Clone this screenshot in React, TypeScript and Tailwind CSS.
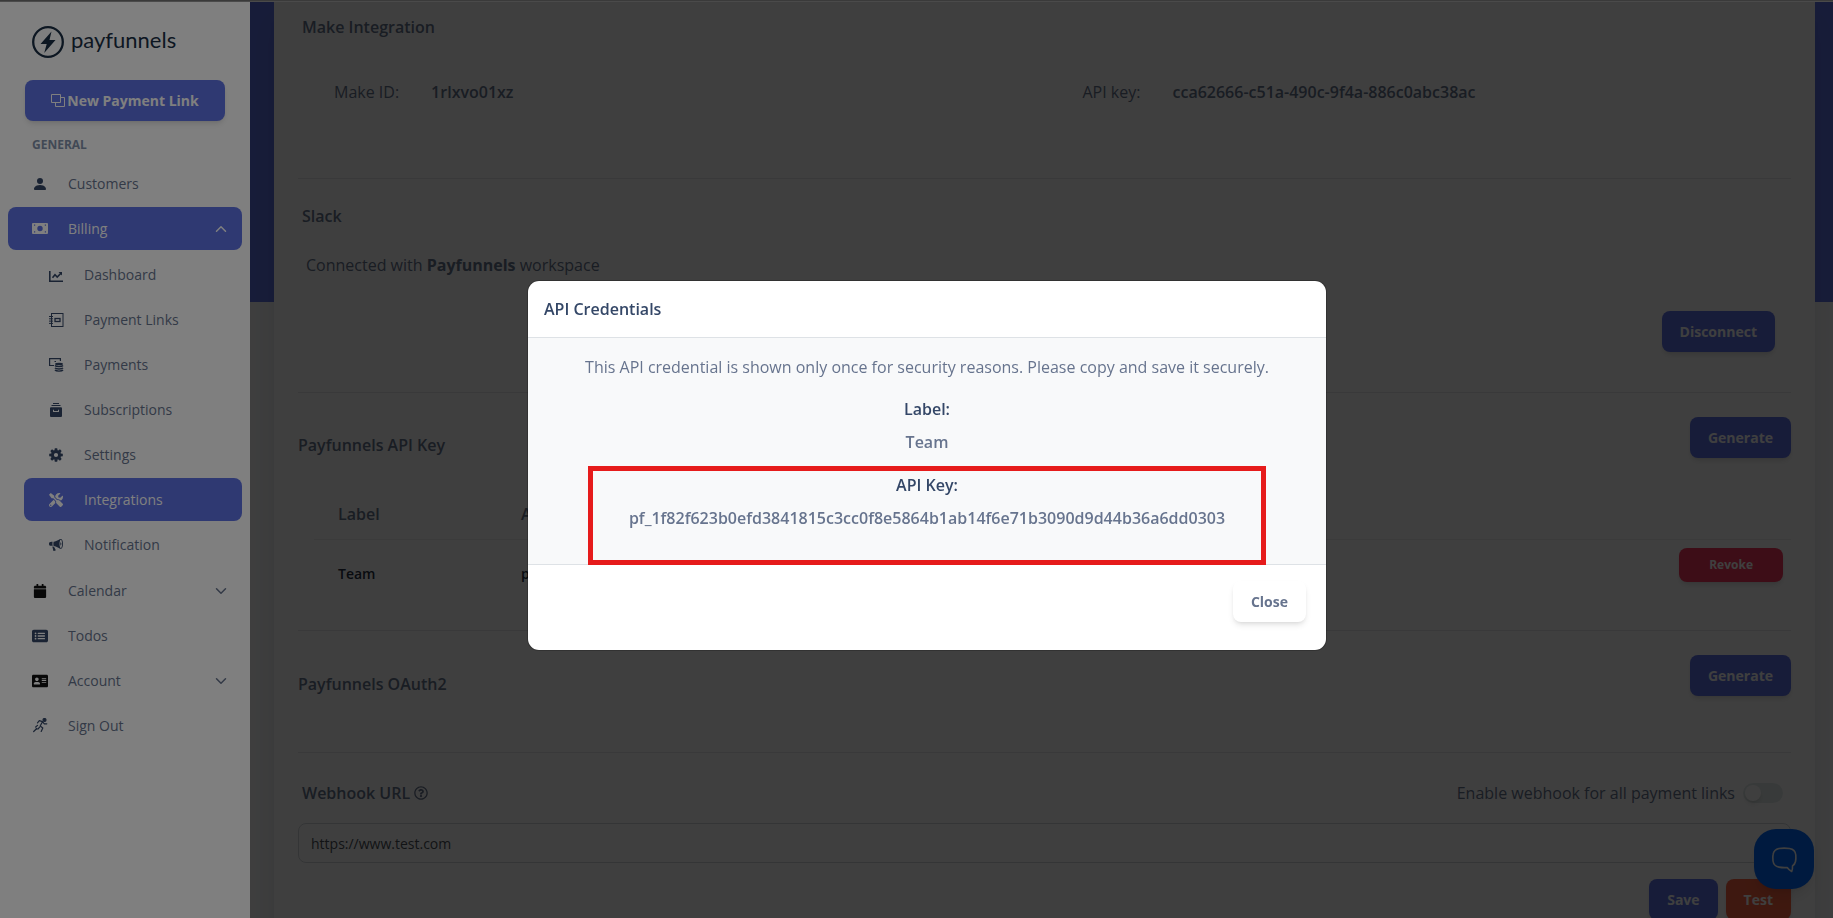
import { useState } from "react";
import type { ReactNode } from "react";
import { ChevronDown, ChevronUp } from "lucide-react";
import { FaAddressCard, FaCalendar, FaRegQuestionCircle, FaTools } from "react-icons/fa";
import { FaRectangleList } from "react-icons/fa6";
import { BsPersonFill } from "react-icons/bs";
import { ImBullhorn } from "react-icons/im";

function CashIcon() {
  return (
    <svg width="16" height="11" viewBox="0 0 16 11" fill="currentColor">
      <path
        fillRule="evenodd"
        d="M1 0h14a1 1 0 0 1 1 1v9a1 1 0 0 1-1 1H1a1 1 0 0 1-1-1V1a1 1 0 0 1 1-1zm7 2.800a2.700 2.700 0 1 0 0 5.400 2.700 2.700 0 0 0 0-5.400zM2 1.600v1.200h1.200V1.600zm10.800 0v1.200H14V1.600zM2 8.200v1.200h1.200V8.200zm10.800 0v1.200H14V8.200z"
      />
    </svg>
  );
}

function ChartIcon() {
  return (
    <svg width="14" height="17" viewBox="0 0 14 17" fill="none" stroke="currentColor">
      <path d="M.8 5v10.200H14" strokeWidth="1.600" />
      <path d="M3.500 11.800 6 8.800l2.200 2.200 4-4" strokeWidth="1.600" />
      <path d="M9.500 6h3.500v3.500z" fill="currentColor" stroke="none" />
    </svg>
  );
}

function CopyIcon() {
  return (
    <svg width="14" height="13" viewBox="0 0 14 13" fill="none" stroke="currentColor">
      <path d="M.5.5h9v8h-9zM9.500 3.500h4v9h-9v-4" />
    </svg>
  );
}

function NotebookIcon() {
  return (
    <svg width="15" height="14" viewBox="0 0 15 14" fill="none" stroke="currentColor">
      <rect x="2.500" y=".5" width="11.500" height="13" />
      <rect x="6" y="5.500" width="5" height="3" strokeWidth="1.300" />
      <path d="M0 3.500h4M0 5.800h4M0 8.100h4M0 10.400h4" />
    </svg>
  );
}

function PaymentsIcon() {
  return (
    <svg width="15" height="14" viewBox="0 0 15 14" fill="none" stroke="currentColor">
      <path d="M5 7.500H.6V.6h10.800V3" strokeWidth="1.200" />
      <path d="M5.500 3.500h1.500" />
      <ellipse cx="10" cy="6" rx="4" ry="1.300" fill="currentColor" stroke="none" />
      <path d="M6 7.500c1 1.500 7 1.500 8 0M6 9.800c1 1.500 7 1.500 8 0M6 12c1 1.500 7 1.500 8 0" strokeWidth="1.400" />
    </svg>
  );
}

function ArchiveIcon() {
  return (
    <svg width="12" height="14" viewBox="0 0 12 14" fill="currentColor">
      <path d="M3 0h6v1H3zM1.500 2h9v1h-9z" />
      <path
        fillRule="evenodd"
        d="M1 4.200h10a1 1 0 0 1 1 1V13a1 1 0 0 1-1 1H1a1 1 0 0 1-1-1V5.200a1 1 0 0 1 1-1zM3 6.800v2.200h6V6.800H8v1.100H4V6.800z"
      />
    </svg>
  );
}

function GearIcon() {
  return (
    <svg width="14" height="14" viewBox="-7 -7 14 14" fill="currentColor">
      <circle r="3.600" fill="none" stroke="currentColor" strokeWidth="3" />
      {[0, 45, 90, 135].map((angle) => (
        <g key={angle} transform={`rotate(${angle})`}>
          <path d="M-1.200-6.800h2.400l.4 2.300h-3.200zM-1.200 6.800h2.400l.4-2.300h-3.200z" />
        </g>
      ))}
    </svg>
  );
}

function RunnerIcon() {
  return (
    <svg width="15" height="15" viewBox="0 0 15 15" fill="none" stroke="currentColor" strokeWidth="1.200" strokeLinecap="round" strokeLinejoin="round">
      <circle cx="11.500" cy="2" r="1.500" fill="currentColor" />
      <path d="M4.500 4.800 6.300 2.600l3.200 1L7.200 8l2.600 2-1.600 3.500M9.500 3.600l1.800 2.200h2.500M6.600 9.200 5 11H3.200" />
      <path d="M.7 13.500l3-3M2.700 9l1.800-1.600" />
    </svg>
  );
}

function ChatIcon() {
  return (
    <svg width="28" height="28" viewBox="0 0 28 28" fill="none" stroke="currentColor" strokeWidth="1.600" strokeLinejoin="round">
      <path d="M9 3.500C12 3 16 3 19.500 3.500c3.600.6 6 3 6.300 6.500.2 2.500.1 4.500-.3 6.500-.4 2-1.400 3.400-3 4.400.1 2 .1 4-.8 5.600-2-1-3.400-2.400-4.500-4-3 .2-5.700.1-8.200-.4-3.500-.6-5.500-2.600-6-6.100-.3-2.300-.3-4.600.1-6.600C3.700 6 5.700 4.200 9 3.500z" />
    </svg>
  );
}

function Logo() {
  return (
    <a href="#" className="flex items-center gap-[7px] pl-8 text-[#1b2f45]">
      <svg width="32" height="32" viewBox="0 0 32 32">
        <circle cx="16" cy="16" r="14.800" fill="none" stroke="currentColor" strokeWidth="2.300" />
        <path d="M19.500 5.500 8.500 18h6.200l-2.500 9L23.500 14h-6z" fill="currentColor" />
      </svg>
      <span className="pb-1 font-[Lato] text-[22px] leading-7">payfunnels</span>
    </a>
  );
}

type NavItemProps = {
  icon: ReactNode;
  label: string;
  nested?: boolean;
  active?: boolean;
  dark?: boolean;
  chevron?: "up" | "down";
};

function NavItem({ icon, label, nested, active, dark, chevron }: NavItemProps) {
  const color = active ? "bg-[#5e72e4] font-medium text-white" : "text-[#67748e]";
  const iconColor = active ? "text-white" : dark ? "text-[#111111]" : "text-[#344767]";
  return (
    <li>
      <a
        href="#"
        className={`flex h-[43px] items-center rounded-lg pr-3 pl-6 ${color} ${nested ? "ml-4" : ""}`}
      >
        <span className={`flex w-4 justify-center ${iconColor}`}>{icon}</span>
        <span className="flex-1 pl-5">{label}</span>
        {chevron === "up" && <ChevronUp size={18} />}
        {chevron === "down" && <ChevronDown size={18} />}
      </a>
    </li>
  );
}

function Sidebar() {
  return (
    <aside className="w-[250px] shrink-0 bg-white pt-6 text-sm">
      <Logo />
      <div className="px-[25px] pt-[22px]">
        <button className="flex h-[41px] w-full items-center justify-center gap-0.5 rounded-lg bg-[#5e72e4] font-bold text-white shadow-md">
          <CopyIcon />
          New Payment Link
        </button>
      </div>
      <h6 className="pt-4 pl-8 text-xs leading-4 font-bold text-[#8392ab]">GENERAL</h6>
      <ul className="flex flex-col gap-0.5 px-2 pt-[9px]">
        <NavItem icon={<BsPersonFill size={16} />} label="Customers" />
        <NavItem icon={<CashIcon />} label="Billing" active chevron="up" />
        <li>
          <ul className="flex flex-col gap-0.5 py-px">
            <NavItem nested icon={<ChartIcon />} label="Dashboard" />
            <NavItem nested icon={<NotebookIcon />} label="Payment Links" />
            <NavItem nested icon={<PaymentsIcon />} label="Payments" />
            <NavItem nested icon={<ArchiveIcon />} label="Subscriptions" />
            <NavItem nested icon={<GearIcon />} label="Settings" />
            <NavItem nested active icon={<FaTools size={14} />} label="Integrations" />
            <NavItem nested icon={<ImBullhorn size={14} />} label="Notification" />
          </ul>
        </li>
        <NavItem dark icon={<FaCalendar size={14} />} label="Calendar" chevron="down" />
        <NavItem icon={<FaRectangleList size={16} />} label="Todos" />
        <NavItem dark icon={<FaAddressCard size={16} />} label="Account" chevron="down" />
        <NavItem icon={<RunnerIcon />} label="Sign Out" />
      </ul>
    </aside>
  );
}

function PrimaryButton({ children }: { children: ReactNode }) {
  return (
    <button className="h-[41px] rounded-lg bg-[#5e72e4] px-[18px] text-sm font-bold text-white shadow-md">
      {children}
    </button>
  );
}

function IntegrationsCard() {
  const [webhookUrl, setWebhookUrl] = useState("https://www.test.com");
  const [allLinks, setAllLinks] = useState(false);

  return (
    <div className="mr-[18px] ml-6 min-h-full bg-white px-6 pb-6 shadow-xl">
      <section className="h-[177px] border-b border-[#e4e6e8] pt-[13px]">
        <h5 className="pl-1 font-semibold">Make Integration</h5>
        <dl className="grid grid-cols-2 pt-[41px] pl-9">
          <div className="flex gap-8">
            <dt>Make ID:</dt>
            <dd className="font-semibold">1rlxvo01xz</dd>
          </div>
          <div className="flex gap-8 pl-5">
            <dt>API key:</dt>
            <dd className="font-semibold">cca62666-c51a-490c-9f4a-886c0abc38ac</dd>
          </div>
        </dl>
      </section>

      <section className="h-[214px] border-b border-[#e4e6e8] pt-[25px]">
        <h5 className="pl-1 font-semibold">Slack</h5>
        <p className="pt-[25px] pl-2">
          Connected with <strong className="font-bold">Payfunnels</strong> workspace
        </p>
        <div className="flex justify-end pt-[34px] pr-4">
          <PrimaryButton>Disconnect</PrimaryButton>
        </div>
      </section>

      <section className="h-[238px] border-b border-[#e4e6e8] pt-6">
        <div className="flex justify-between">
          <h5 className="pt-4 font-semibold">Payfunnels API Key</h5>
          <PrimaryButton>Generate</PrimaryButton>
        </div>
        <div className="pt-8 pl-4">
          <table className="w-full table-fixed text-left">
            <thead>
              <tr className="h-[49px] border-b border-[#eceeef]">
                <th className="w-[183px] pl-6 font-semibold">Label</th>
                <th className="pl-6 font-semibold">API Key</th>
                <th className="w-[160px]" />
              </tr>
            </thead>
            <tbody>
              <tr className="align-top text-sm font-semibold text-[#252f40]">
                <td className="pt-6 pl-6">Team</td>
                <td className="pt-6 pl-6">pf_1f82f6**********</td>
                <td className="pt-2 pr-2 text-right">
                  <button className="h-[34px] rounded-lg bg-[#f5365c] px-[30px] text-xs font-bold text-white shadow-md">
                    Revoke
                  </button>
                </td>
              </tr>
            </tbody>
          </table>
        </div>
      </section>

      <section className="flex h-[122px] items-start justify-between border-b border-[#e4e6e8] pt-6">
        <h5 className="pt-[17px] font-semibold">Payfunnels OAuth2</h5>
        <PrimaryButton>Generate</PrimaryButton>
      </section>

      <section className="pt-7">
        <div className="flex items-center justify-between pr-2 pl-1">
          <label htmlFor="webhook" className="flex items-center gap-1 font-semibold">
            Webhook URL <FaRegQuestionCircle size={14} />
          </label>
          <label className="flex items-center gap-2">
            Enable webhook for all payment links
            <input
              type="checkbox"
              checked={allLinks}
              onChange={(e) => setAllLinks(e.target.checked)}
              className="h-5 w-10 appearance-none rounded-full bg-[#e3ebea] before:block before:size-4 before:translate-x-0.5 before:translate-y-0.5 before:rounded-full before:bg-white before:shadow-md checked:bg-[#5e72e4] checked:before:translate-x-5"
            />
          </label>
        </div>
        <input
          id="webhook"
          type="text"
          value={webhookUrl}
          onChange={(e) => setWebhookUrl(e.target.value)}
          className="mt-[18px] block h-10 w-full rounded-lg border border-[#d2d6da] px-3 text-sm text-[#495057]"
        />
        <div className="flex justify-end gap-2 pt-4">
          <PrimaryButton>Save</PrimaryButton>
          <button className="h-[41px] rounded-lg bg-[#fb6340] px-[18px] text-sm font-bold text-white shadow-md">
            Test
          </button>
        </div>
      </section>
    </div>
  );
}

function CredentialsModal() {
  return (
    <div className="fixed inset-0 z-30 flex items-center justify-center pt-[13px] pl-[21px]">
      <div
        role="dialog"
        aria-labelledby="credentials-title"
        className="w-[800px] overflow-hidden rounded-xl border border-black/20 bg-white bg-clip-padding"
      >
        <div className="border-b border-[#dee2e6] px-4 py-4">
          <h5 id="credentials-title" className="font-semibold text-[#344767]">
            API Credentials
          </h5>
        </div>
        <div className="border-b border-[#dee2e6] bg-[#f8f9fa] pt-[17px] text-center">
          <p>This API credential is shown only once for security reasons. Please copy and save it securely.</p>
          <h6 className="pt-[18px] font-semibold text-[#344767]">Label:</h6>
          <p className="pt-[9px] pb-3 font-semibold">Team</p>
          <div className="relative mx-[60px] -mb-px border-[5px] border-[#e61b1b] pt-0.5 pb-[30px]">
            <h6 className="font-semibold text-[#344767]">API Key:</h6>
            <p className="pt-[9px] font-semibold">
              pf_1f82f623b0efd3841815c3cc0f8e5864b1ab14f6e71b3090d9d44b36a6dd0303
            </p>
          </div>
        </div>
        <div className="flex justify-end px-5 pt-4 pb-7">
          <button className="h-[41px] rounded-lg bg-white px-[18px] text-sm font-bold shadow-md">Close</button>
        </div>
      </div>
    </div>
  );
}

export default function App() {
  return (
    <div className="flex h-screen flex-col overflow-hidden bg-[#f8f9fa] font-['Open_Sans',sans-serif] text-base text-[#67748e]">
      <div className="relative z-20 h-0.5 shrink-0 border-b border-[#4a4a4a] bg-[#3a3a3a]" />
      <div className="flex min-h-0 flex-1">
        <Sidebar />
        <main className="relative min-w-0 flex-1 overflow-hidden bg-[linear-gradient(#5e72e4_300px,#f8f9fa_300px)]">
          <IntegrationsCard />
          <button
            aria-label="Open chat"
            className="fixed right-[19px] bottom-[29px] flex size-[60px] items-center justify-center rounded-[22px] bg-[#0068ff] text-white shadow-lg"
          >
            <ChatIcon />
          </button>
          <div className="absolute inset-0 bg-black/50" />
        </main>
      </div>
      {/* Page backdrop behind the dialog */}
      <div className="fixed inset-0 z-10 bg-black/50" />
      <CredentialsModal />
    </div>
  );
}
